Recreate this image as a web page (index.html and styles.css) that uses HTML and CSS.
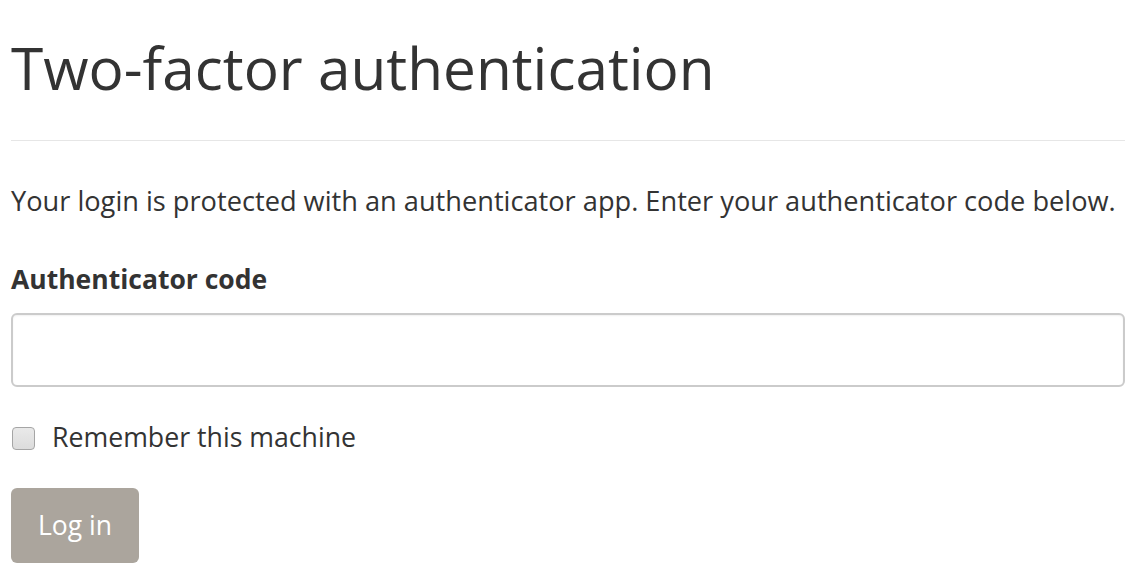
FILE: index.html
```html
<!DOCTYPE html>
<html lang="en">
<head>
    <meta charset="UTF-8">
    <title>Two-factor authentication</title>
    <link rel="stylesheet" href="styles.css">
</head>
<body>
<div class="container">
    <h1 class="title">Two-factor authentication</h1>
    <hr class="divider">
    <p class="intro">Your login is protected with an authenticator app. Enter your authenticator code below.</p>
    <form class="twofa-form" method="POST">
        <label class="field-label" for="code">Authenticator code</label>
        <input class="field-input" id="code" type="text" name="code" autocomplete="off">
        <label class="check-row">
            <input class="check-box" type="checkbox" name="remember">
            <span class="check-text">Remember this machine</span>
        </label>
        <button class="btn-login" type="submit" disabled>Log in</button>
    </form>
</div>
</body>
</html>
```

FILE: styles.css
```css
body {
    margin: 0;
    font-family: 'Open Sans', 'Noto Sans', sans-serif;
    color: #333;
    background: #fff;
}

.container {
    width: 1114px;
    margin-left: 11px;
}

.title {
    margin: 32px 0 0;
    font-size: 58.5px;
    font-weight: 400;
    line-height: 1.2;
    color: #333;
}

.divider {
    margin: 38px 0 0;
    border: 0;
    border-top: 1px solid #e6e6e6;
}

.intro {
    margin: 40px 0 0;
    font-size: 27.2px;
    line-height: 1.5;
}

.twofa-form {
    display: flex;
    flex-direction: column;
    align-items: flex-start;
}

.field-label {
    margin-top: 38px;
    font-size: 26.5px;
    font-weight: 700;
    line-height: 1.5;
}

.field-input {
    box-sizing: border-box;
    width: 100%;
    height: 74px;
    margin-top: 13px;
    padding: 0 18px;
    font: inherit;
    font-size: 26.5px;
    border: 2px solid #cbcbcb;
    border-radius: 6px;
    box-shadow: inset 0 1px 2px rgba(0, 0, 0, 0.06);
    outline: none;
}

.check-row {
    display: flex;
    align-items: center;
    gap: 17px;
    margin-top: 30px;
    font-size: 26.7px;
    line-height: 1.5;
}

.check-box {
    appearance: none;
    box-sizing: border-box;
    width: 23px;
    height: 23px;
    margin: 3px 0 0 1px;
    background: linear-gradient(#e9e9e9, #dcdcdc);
    border: 1.5px solid #a5a5a5;
    border-radius: 4px;
}

.btn-login {
    margin-top: 31px;
    width: 128px;
    height: 75px;
    font: inherit;
    font-size: 26.5px;
    color: #fff;
    background: #aba59d;
    border: none;
    border-radius: 6px;
}
```
